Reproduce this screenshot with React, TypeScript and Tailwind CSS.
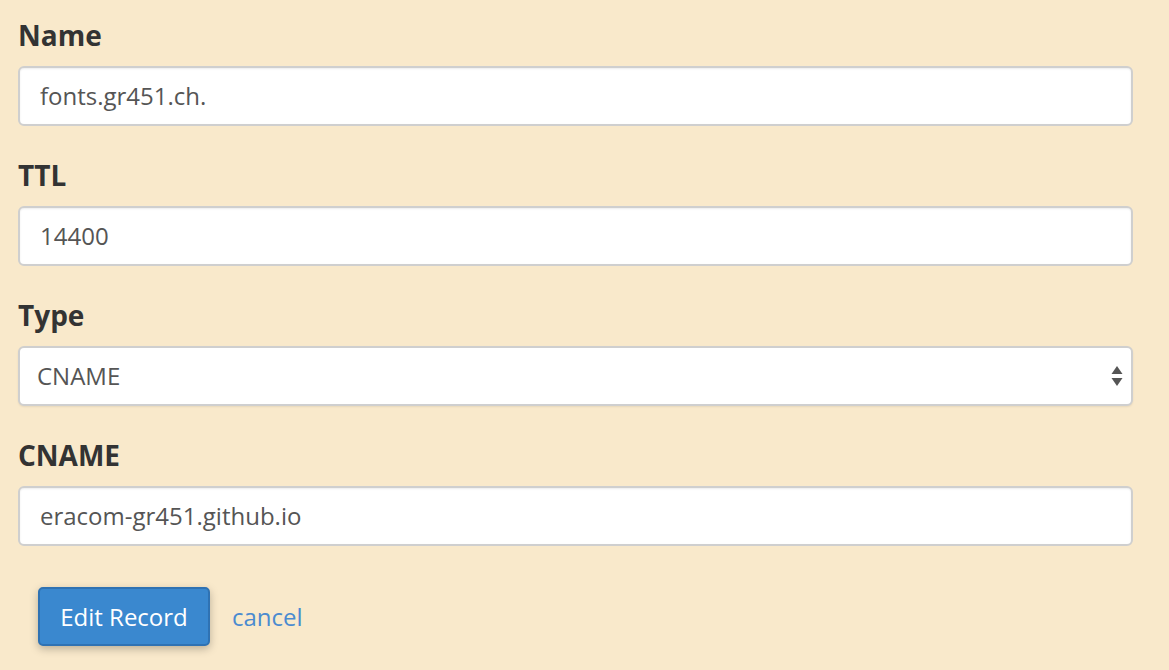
import React from 'react';

const fields = [
  { label: 'Name', value: 'fonts.gr451.ch.' },
  { label: 'TTL', value: '14400' },
];

const Label = ({ children }: { children: React.ReactNode }) => (
  <label className="block text-[28px] leading-[34px] font-bold text-[#333]">{children}</label>
);

const TextInput = ({ value }: { value: string }) => (
  <div className="mt-[14px] h-[60px] flex items-center px-[20px] bg-white border-2 border-[#cfcfcf] rounded-[6px] shadow-[inset_0_1px_2px_rgba(0,0,0,0.08)] text-[24px] text-[#555]">
    {value}
  </div>
);

export default function App() {
  return (
    <div
      className="min-h-screen w-full bg-[#f9e9cb] pt-[18px] pl-[18px] pr-[36px]"
      style={{ fontFamily: '"Open Sans", "Noto Sans", sans-serif' }}
    >
      <div className="flex flex-col gap-[32px]">
        {fields.map((f) => (
          <div key={f.label}>
            <Label>{f.label}</Label>
            <TextInput value={f.value} />
          </div>
        ))}

        <div>
          <Label>Type</Label>
          <div className="mt-[14px] h-[60px] flex items-center justify-between pl-[17px] pr-[8px] bg-white border-2 border-[#cfcfcf] rounded-[6px] shadow-[0_1px_2px_rgba(0,0,0,0.08)] text-[24px] text-[#555]">
            <span>CNAME</span>
            {/* select arrows */}
            <svg width="12" height="22" viewBox="0 0 12 22">
              <polygon points="6,1 11.5,9 0.5,9" fill="#555" />
              <polygon points="0.5,13 11.5,13 6,21" fill="#555" />
            </svg>
          </div>
        </div>

        <div>
          <Label>CNAME</Label>
          <TextInput value="eracom-gr451.github.io" />
        </div>
      </div>

      <div className="mt-[41px] ml-[20px] flex items-center gap-[22px]">
        <button className="h-[59px] w-[172px] rounded-[5px] bg-[#3a88cf] border-2 border-[#2f72b3] text-white text-[24px] shadow-[0_3px_8px_rgba(0,0,0,0.25)]">
          Edit Record
        </button>
        <a className="text-[24px] text-[#4b8bd0]">cancel</a>
      </div>
    </div>
  );
}
